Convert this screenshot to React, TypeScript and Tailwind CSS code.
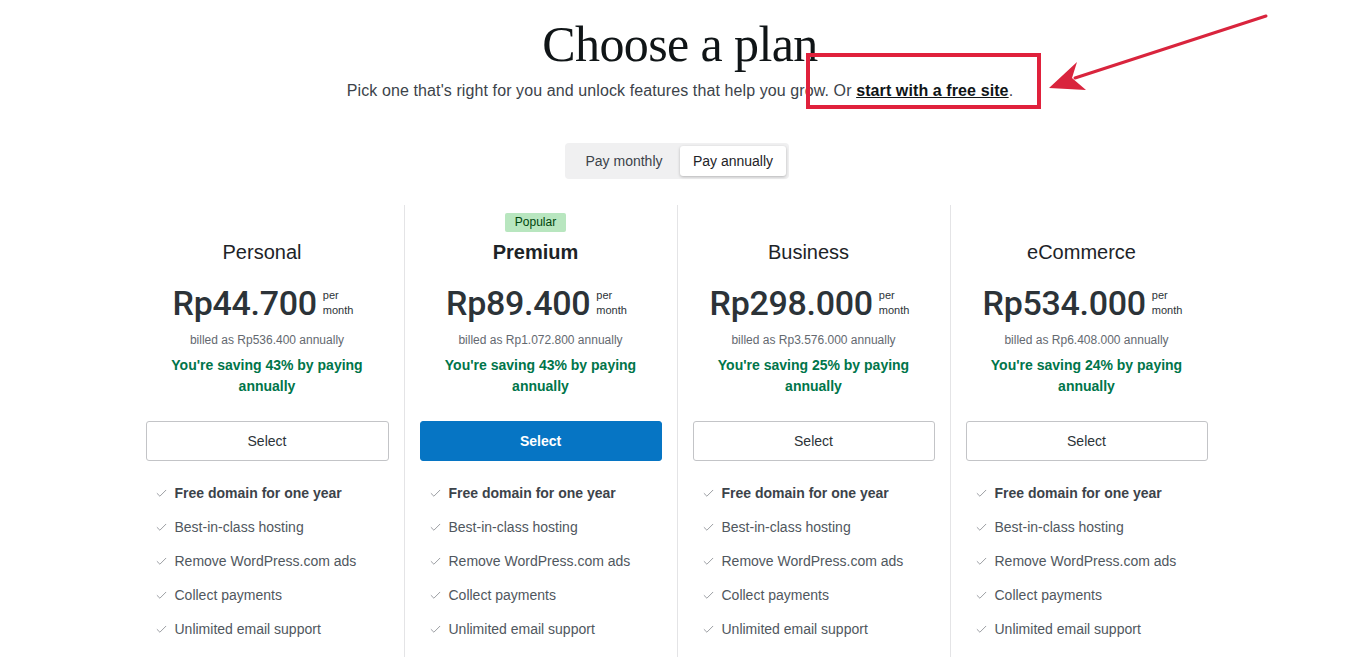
import { Check } from "lucide-react";

type Plan = {
  name: string;
  price: string;
  billed: string;
  saving: string;
  popular?: boolean;
};

const plans: Plan[] = [
  { name: "Personal", price: "Rp44.700", billed: "billed as Rp536.400 annually", saving: "You're saving 43% by paying annually" },
  { name: "Premium", price: "Rp89.400", billed: "billed as Rp1.072.800 annually", saving: "You're saving 43% by paying annually", popular: true },
  { name: "Business", price: "Rp298.000", billed: "billed as Rp3.576.000 annually", saving: "You're saving 25% by paying annually" },
  { name: "eCommerce", price: "Rp534.000", billed: "billed as Rp6.408.000 annually", saving: "You're saving 24% by paying annually" },
];

const features = [
  "Free domain for one year",
  "Best-in-class hosting",
  "Remove WordPress.com ads",
  "Collect payments",
  "Unlimited email support",
];

function PlanColumn({ plan, first }: { plan: Plan; first: boolean }) {
  return (
    <div className={`flex flex-col items-center px-[15px] pt-[8px] ${first ? "" : "border-l border-[#e4e4e6]"}`}>
      <div className="h-[19px] flex items-center mr-[10px]">
        {plan.popular && (
          <span className="bg-[#b8e6bf] text-[#00450c] text-[12px] leading-[19px] px-[10px] rounded-[2px]">Popular</span>
        )}
      </div>
      <div className={`mt-[6px] mr-[10px] text-[20px] leading-[28px] text-[#1d2327] ${plan.popular ? "font-semibold" : ""}`}>
        {plan.name}
      </div>
      <div className="mt-[15px] mr-[8px] h-[44px] flex items-center gap-[6px]">
        <span className="font-['Roboto'] font-medium text-[34px] leading-[44px] text-[#2c3338] tracking-[-0.3px]">{plan.price}</span>
        <span className="flex flex-col text-[11px] leading-[15px] text-[#2c3338]">
          <span>per</span>
          <span>month</span>
        </span>
      </div>
      <div className="mt-[6px] text-[12px] leading-[18px] text-[#646970]">{plan.billed}</div>
      <div className="mt-[6px] text-[14px] leading-[21px] font-bold text-[#00754a] text-center w-[215px]">{plan.saving}</div>
      <button
        className={`mt-[24px] h-[40px] w-full rounded-[3px] text-[14px] ${
          plan.popular
            ? "bg-[#0675c4] text-white font-semibold border border-[#0675c4]"
            : "bg-white text-[#2c3338] border border-[#c3c4c7]"
        }`}
      >
        Select
      </button>
      <ul className="mt-[15px] w-full">
        {features.map((f, i) => (
          <li key={f} className="flex items-center h-[34px] text-[14px] pl-[9px]">
            <Check size={13} strokeWidth={1.6} className="text-[#8c8f94] mr-[7px] shrink-0" />
            <span className={i === 0 ? "font-bold text-[#3c434a]" : "text-[#50575e]"}>{f}</span>
          </li>
        ))}
      </ul>
    </div>
  );
}

export default function App() {
  return (
    <div className="relative w-[1360px] h-[657px] overflow-hidden bg-white font-['Liberation_Sans',sans-serif]">
      <div className="flex flex-col items-center">
        <h1 className="mt-[17px] font-['Liberation_Serif',serif] text-[50px] leading-[54px] tracking-[-0.6px] text-[#101517]">
          Choose a plan
        </h1>
        <p className="mt-[8px] text-[16px] leading-[24px] tracking-[0.1px] text-[#3c434a]">
          Pick one that's right for you and unlock features that help you grow. Or{" "}
          <a className="underline text-[#101517] font-semibold">start with a free site</a>.
        </p>
        <div className="mt-[40px] mr-[6px] flex bg-[#f0f0f1] rounded-[4px] p-[3px] h-[36px]">
          <div className="px-[12px] flex items-center text-[14px] text-[#3c434a] w-[112px] justify-center">Pay monthly</div>
          <div className="px-[12px] flex items-center text-[14px] text-[#1d2327] bg-white rounded-[3px] shadow-[0_1px_3px_rgba(0,0,0,0.25)] w-[106px] justify-center">
            Pay annually
          </div>
        </div>
        <div className="mt-[26px] mr-[7px] w-[1092px] grid grid-cols-4 h-[500px]">
          {plans.map((p, i) => (
            <PlanColumn key={p.name} plan={p} first={i === 0} />
          ))}
        </div>
      </div>

      {/* annotation overlay */}
      <div className="absolute left-[806px] top-[53px] w-[235px] h-[56px] border-[4px] border-[#e0213c]" />
      <svg className="absolute left-0 top-0 pointer-events-none" width="1360" height="657">
        <line x1="1266" y1="16" x2="1075" y2="78" stroke="#d9243d" strokeWidth="3" strokeLinecap="round" />
        <polygon points="1049,88 1077,62 1072,78 1086,90" fill="#d9243d" />
      </svg>
    </div>
  );
}
